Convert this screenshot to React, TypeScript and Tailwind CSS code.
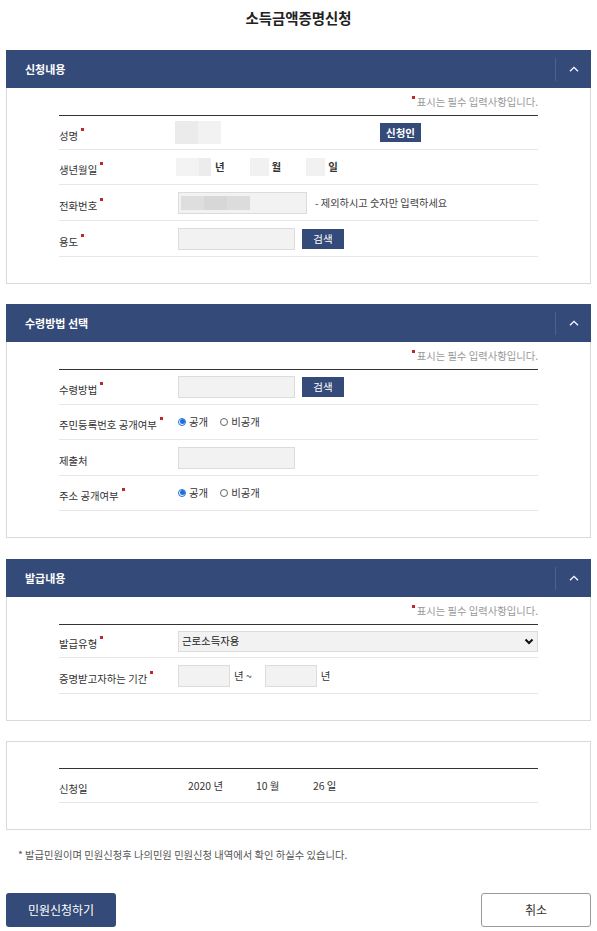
import { ReactNode } from 'react';

const font = { fontFamily: '"Noto Sans CJK KR", "Noto Sans", sans-serif' };

function Req() {
  return <i className="ml-[3px] inline-block h-[3px] w-[3px] bg-[#c0272d]" />;
}

function Label({ text, req = true }: { text: string; req?: boolean }) {
  return (
    <div className="w-[119px] shrink-0">
      <span className="inline-flex items-start text-[10.4px] leading-[16px] text-[#333]">
        {text}
        {req && <Req />}
      </span>
    </div>
  );
}

function Row({ h, label, req, children }: { h: string; label: string; req?: boolean; children?: ReactNode }) {
  return (
    <div className={`flex items-center border-b border-[#e6e6e6] ${h}`}>
      <Label text={label} req={req} />
      <div className="flex flex-1 items-center text-[10.4px] text-[#333]">{children}</div>
    </div>
  );
}

function NavyBtn({ children, cls }: { children: ReactNode; cls: string }) {
  return (
    <button className={`flex items-center justify-center bg-[#344a78] text-[10.5px] text-white ${cls}`}>
      {children}
    </button>
  );
}

function Radio({ checked, label }: { checked?: boolean; label: string }) {
  return (
    <span className="mr-[12px] inline-flex items-center gap-[3px] text-[10.4px] text-[#333]">
      {checked ? (
        <span className="flex h-[8px] w-[8px] items-center justify-center rounded-full border border-[#1d6fd8] bg-white">
          <span className="h-[5px] w-[5px] rounded-full bg-[#1d6fd8]" />
        </span>
      ) : (
        <span className="h-[8px] w-[8px] rounded-full border border-[#666] bg-white" />
      )}
      {label}
    </span>
  );
}

function Section({ title, children }: { title?: string; children: ReactNode }) {
  return (
    <section>
      {title && (
        <div className="flex h-[38px] items-center justify-between bg-[#344a78] pl-[19px]">
          <span className="text-[11px] font-bold text-white">{title}</span>
          <div className="flex h-[23px] w-[36px] items-center justify-center border-l border-[#4c618e]">
            <svg width="10" height="6" viewBox="0 0 10 6" fill="none">
              <path d="M1 5.2 5 1.3 9 5.2" stroke="white" strokeWidth="1.3" />
            </svg>
          </div>
        </div>
      )}
      <div className={`border border-[#d9d9d9] px-[52px] pb-[26px] ${title ? 'border-t-0 pt-[7px]' : 'pt-[26px]'}`}>
        {title && (
          <div className="mb-[6px] flex h-[14px] items-start justify-end text-[10.3px] leading-[14px] text-[#999]">
            <i className="mr-[2px] mt-[1px] inline-block h-[3px] w-[3px] bg-[#c0272d]" />
            표시는 필수 입력사항입니다.
          </div>
        )}
        <div className="border-t border-[#333]">{children}</div>
      </div>
    </section>
  );
}

export default function App() {
  return (
    <div className="min-h-[931px] bg-white px-[6px]" style={font}>
      <h1 className="flex h-[50px] items-start justify-center pt-[8px] text-[14.4px] font-bold leading-[20px] text-[#222]">
        소득금액증명신청
      </h1>

      <Section title="신청내용">
        <Row h="h-[34px]" label="성명">
          <div className="-ml-[3px] flex h-[23px]">
            <span className="w-[23px] bg-[#ebebeb]" />
            <span className="w-[23px] bg-[#f2f2f2]" />
          </div>
          <NavyBtn cls="ml-[159px] h-[19px] w-[41px] font-bold">신청인</NavyBtn>
        </Row>
        <Row h="h-[35px]" label="생년월일">
          <div className="-ml-[2px] flex h-[18px]">
            <span className="w-[23px] bg-[#f3f3f3]" />
            <span className="w-[12px] bg-[#ececec]" />
          </div>
          <span className="ml-[4px] font-bold">년</span>
          <span className="ml-[25px] h-[18px] w-[19px] bg-[#f1f1f1]" />
          <span className="ml-[3px] font-bold">월</span>
          <span className="ml-[25px] h-[18px] w-[19px] bg-[#f1f1f1]" />
          <span className="ml-[3px] font-bold">일</span>
        </Row>
        <Row h="h-[36px]" label="전화번호">
          <div className="flex h-[22px] w-[129px] items-center border border-[#dcdcdc] bg-[#f2f2f2] pl-[2px]">
            <span className="h-[14px] w-[23px] bg-[#dedede]" />
            <span className="h-[14px] w-[23px] bg-[#d7d7d7]" />
            <span className="h-[14px] w-[23px] bg-[#dcdcdc]" />
          </div>
          <span className="ml-[8px] text-[10.2px] text-[#444]">- 제외하시고 숫자만 입력하세요</span>
        </Row>
        <Row h="h-[36px]" label="용도">
          <div className="h-[22px] w-[117px] border border-[#dcdcdc] bg-[#f2f2f2]" />
          <NavyBtn cls="ml-[7px] h-[20px] w-[42px]">검색</NavyBtn>
        </Row>
      </Section>

      <div className="mt-[20px]">
        <Section title="수령방법 선택">
          <Row h="h-[35px]" label="수령방법">
            <div className="h-[22px] w-[117px] border border-[#dcdcdc] bg-[#f2f2f2]" />
            <NavyBtn cls="ml-[7px] h-[20px] w-[42px]">검색</NavyBtn>
          </Row>
          <Row h="h-[35px]" label="주민등록번호 공개여부">
            <Radio checked label="공개" />
            <Radio label="비공개" />
          </Row>
          <Row h="h-[36px]" label="제출처" req={false}>
            <div className="h-[22px] w-[117px] border border-[#dcdcdc] bg-[#f2f2f2]" />
          </Row>
          <Row h="h-[35px]" label="주소 공개여부">
            <Radio checked label="공개" />
            <Radio label="비공개" />
          </Row>
        </Section>
      </div>

      <div className="mt-[21px]">
        <Section title="발급내용">
          <Row h="h-[33px]" label="발급유형">
            <div className="flex h-[21px] flex-1 items-center justify-between border border-[#dcdcdc] bg-[#f2f2f2] pl-[3px] pr-[3px] text-[10.4px] text-[#222]">
              근로소득자용
              <svg width="10" height="7" viewBox="0 0 10 7" fill="none">
                <path d="M1.5 1.5 5 5 8.5 1.5" stroke="#111" strokeWidth="2" />
              </svg>
            </div>
          </Row>
          <Row h="h-[36px]" label="증명받고자하는 기간">
            <div className="h-[22px] w-[52px] border border-[#dcdcdc] bg-[#f2f2f2]" />
            <span className="ml-[4px]">년 ~</span>
            <div className="ml-[13px] h-[22px] w-[52px] border border-[#dcdcdc] bg-[#f2f2f2]" />
            <span className="ml-[4px]">년</span>
          </Row>
        </Section>
      </div>

      <div className="mt-[20px]">
        <Section>
          <Row h="h-[34px]" label="신청일" req={false}>
            <span className="ml-[10px] w-[68px]">2020 년</span>
            <span className="w-[57px]">10 월</span>
            <span>26 일</span>
          </Row>
        </Section>
      </div>

      <p className="mt-[18px] pl-[12px] text-[10.3px] leading-[14px] text-[#555]">
        * 발급민원이며 민원신청후 나의민원 민원신청 내역에서 확인 하실수 있습니다.
      </p>

      <div className="mt-[31px] flex justify-between">
        <button className="h-[34px] w-[110px] rounded-[3px] bg-[#344a78] text-[12px] text-white">민원신청하기</button>
        <button className="h-[34px] w-[110px] rounded-[3px] border border-[#999] bg-white text-[12px] text-[#333]">
          취소
        </button>
      </div>
    </div>
  );
}
